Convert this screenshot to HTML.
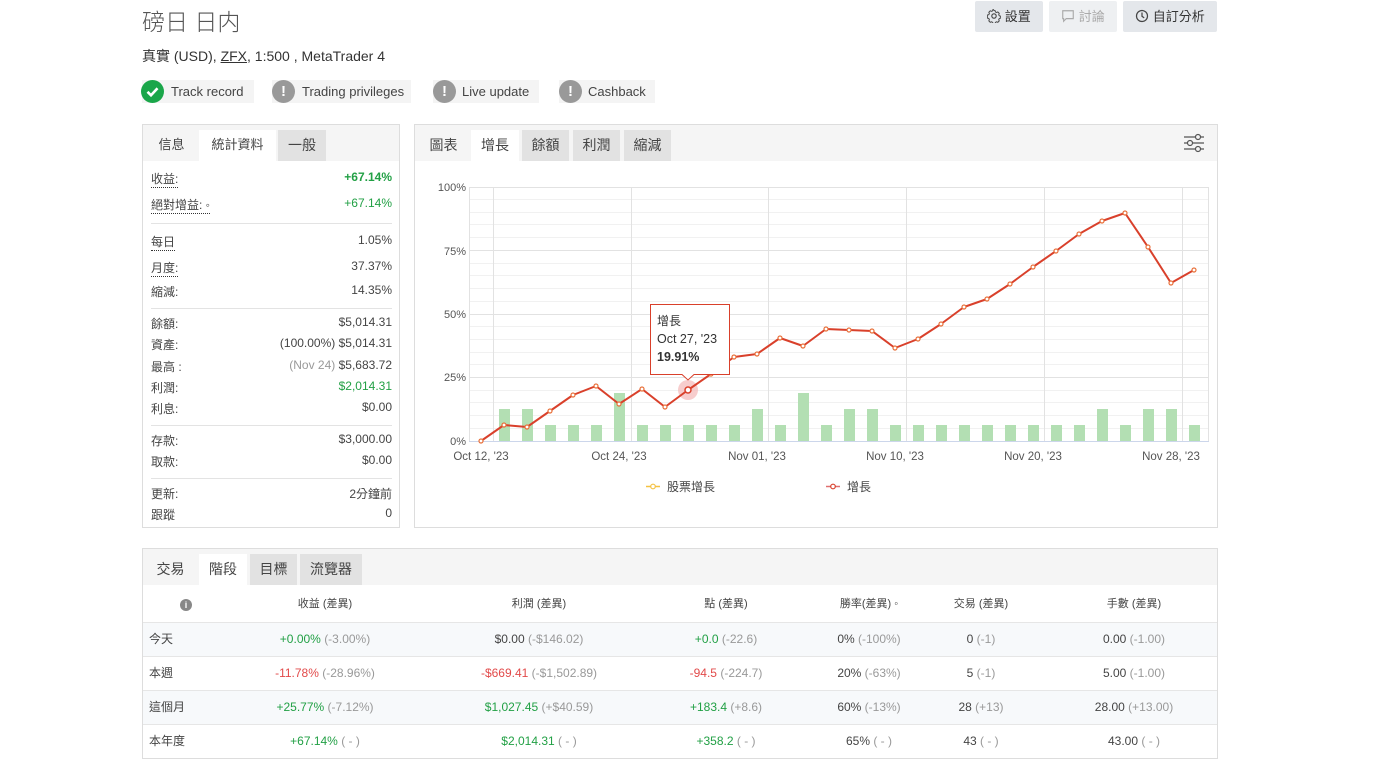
<!DOCTYPE html>
<html><head><meta charset="utf-8">
<style>
*{box-sizing:border-box;margin:0;padding:0}
body{width:1395px;height:779px;background:#fff;font-family:"Liberation Sans","Noto Sans CJK TC",sans-serif;color:#333;position:relative;overflow:hidden;font-size:12px}
.a{position:absolute;white-space:nowrap}
.title{left:142px;top:3px;font-size:23px;color:#555;font-weight:300}
.sub{left:142px;top:46px;font-size:14px;color:#333}
.badge{position:absolute;top:80px;height:23px;background:#f4f4f4;font-size:13px;color:#444;line-height:23px}
.ic{position:absolute;top:80px;width:23px;height:23px;border-radius:50%;background:#999;color:#fff;font-weight:bold;text-align:center;line-height:23px;font-size:15px}
.btn{position:absolute;top:1px;height:31px;background:#e4e7eb;border-radius:2px;font-size:13px;color:#333;line-height:31px;text-align:center}
.panel{position:absolute;border:1px solid #ddd;background:#fff}
.tabbar{position:absolute;left:0;top:0;right:0;height:36px;background:#f5f5f5}
.tab{position:absolute;top:5px;height:31px;line-height:30px;font-size:13px;color:#444;text-align:center}
.tw{background:#fff}
.tg{background:#e2e2e2}
.row{position:absolute;left:8px;right:7px;font-size:12px;color:#444}
.row .l{position:absolute;left:0}
.row .r{position:absolute;right:0}
.dot{border-bottom:1px dotted #333}
.g{color:#22a045}.rd{color:#e24a4a}.gr{color:#999}
.sep{position:absolute;left:8px;right:7px;height:1px;background:#e3e3e3}
.tr{position:absolute;left:0;right:0;height:34px;border-top:1px solid #e6e6e6}
.td{position:absolute;top:0;line-height:33px;font-size:12px;color:#444;transform:translateX(-50%)}
</style></head><body>
<div class="a title">磅日 日内</div>
<div class="a sub">真實 (USD), <span style="text-decoration:underline">ZFX</span>, 1:500 , MetaTrader 4</div>

<div class="badge" style="left:142px;width:112px;padding-left:29px">Track record</div>
<div class="ic" style="left:141px;background:#1aa64a"><svg width="23" height="23" viewBox="0 0 23 23"><path d="M6.5 11.8l3.5 3.5 6.5-7" stroke="#fff" stroke-width="2.6" fill="none"/></svg></div>
<div class="badge" style="left:272px;width:139px;padding-left:30px">Trading privileges</div>
<div class="ic" style="left:272px">!</div>
<div class="badge" style="left:433px;width:106px;padding-left:29px">Live update</div>
<div class="ic" style="left:433px">!</div>
<div class="badge" style="left:559px;width:96px;padding-left:29px">Cashback</div>
<div class="ic" style="left:559px">!</div>

<div class="btn" style="left:975px;width:68px"><svg width="14" height="14" viewBox="0 0 16 16" style="vertical-align:-2px"><circle cx="8" cy="8" r="2.5" fill="none" stroke="#444" stroke-width="1.3"/><path d="M8 1.5l1.2.2.4 1.6 1.3.7 1.5-.6 1.6 1.6-.6 1.5.7 1.3 1.6.4v2.2l-1.6.4-.7 1.3.6 1.5-1.6 1.6-1.5-.6-1.3.7-.4 1.6H6.9l-.4-1.6-1.3-.7-1.5.6-1.6-1.6.6-1.5-.7-1.3-1.6-.4V6.9l1.6-.4.7-1.3-.6-1.5 1.6-1.6 1.5.6 1.3-.7.4-1.6z" fill="none" stroke="#444" stroke-width="1.1"/></svg> 設置</div>
<div class="btn" style="left:1049px;width:68px;background:#eef0f2;color:#aaa"><svg width="14" height="14" viewBox="0 0 16 16" style="vertical-align:-2px"><path d="M2 2h12v9H6l-3 3v-3H2z" fill="none" stroke="#aaa" stroke-width="1.3"/></svg> 討論</div>
<div class="btn" style="left:1123px;width:94px"><svg width="14" height="14" viewBox="0 0 16 16" style="vertical-align:-2px"><circle cx="8" cy="8" r="6.3" fill="none" stroke="#444" stroke-width="1.4"/><path d="M8 4v4.3l2.5 1.8" fill="none" stroke="#444" stroke-width="1.4"/></svg> 自訂分析</div>

<!-- left panel -->
<div class="panel" style="left:142px;top:124px;width:258px;height:404px">
 <div class="tabbar"></div>
 <div class="tab" style="left:1px;width:55px">信息</div>
 <div class="tab tw" style="left:56px;width:77px">統計資料</div>
 <div class="tab tg" style="left:135px;width:48px;font-size:14px">一般</div>
 <div class="row" style="top:45px"><span class="l dot">收益:</span><span class="r g" style="font-weight:bold">+67.14%</span></div>
 <div class="row" style="top:71px"><span class="l dot">絕對增益: ◦</span><span class="r g">+67.14%</span></div>
 <div class="sep" style="top:98px"></div>
 <div class="row" style="top:108px"><span class="l dot">每日</span><span class="r">1.05%</span></div>
 <div class="row" style="top:134px"><span class="l dot">月度:</span><span class="r">37.37%</span></div>
 <div class="row" style="top:158px"><span class="l">縮減:</span><span class="r">14.35%</span></div>
 <div class="sep" style="top:183px"></div>
 <div class="row" style="top:190px"><span class="l">餘額:</span><span class="r">$5,014.31</span></div>
 <div class="row" style="top:211px"><span class="l">資產:</span><span class="r">(100.00%) $5,014.31</span></div>
 <div class="row" style="top:233px"><span class="l">最高 :</span><span class="r"><span class="gr">(Nov 24)</span> $5,683.72</span></div>
 <div class="row" style="top:254px"><span class="l">利潤:</span><span class="r g">$2,014.31</span></div>
 <div class="row" style="top:275px"><span class="l">利息:</span><span class="r">$0.00</span></div>
 <div class="sep" style="top:300px"></div>
 <div class="row" style="top:307px"><span class="l">存款:</span><span class="r">$3,000.00</span></div>
 <div class="row" style="top:328px"><span class="l">取款:</span><span class="r">$0.00</span></div>
 <div class="sep" style="top:353px"></div>
 <div class="row" style="top:360px"><span class="l">更新:</span><span class="r">2分鐘前</span></div>
 <div class="row" style="top:381px"><span class="l">跟蹤</span><span class="r">0</span></div>
</div>

<!-- chart panel -->
<div class="panel" style="left:414px;top:124px;width:804px;height:404px">
 <div class="tabbar"></div>
 <div class="tab" style="left:1px;width:55px;font-size:14px">圖表</div>
 <div class="tab tw" style="left:56px;width:48px;font-size:14px">增長</div>
 <div class="tab tg" style="left:107px;width:47px;font-size:14px">餘額</div>
 <div class="tab tg" style="left:158px;width:47px;font-size:14px">利潤</div>
 <div class="tab tg" style="left:209px;width:47px;font-size:14px">縮減</div>
 <svg style="position:absolute;left:768px;top:8px" width="22" height="20" viewBox="0 0 22 20"><g stroke="#555" stroke-width="1.2" fill="none"><path d="M1 4h20M1 10h20M1 16h20"/><circle cx="15" cy="4" r="2.5" fill="#f5f5f5"/><circle cx="7" cy="10" r="2.5" fill="#f5f5f5"/><circle cx="15" cy="16" r="2.5" fill="#f5f5f5"/></g></svg>
</div>

<svg class="a" style="left:0;top:0" width="1395" height="779" font-family="Liberation Sans, Noto Sans CJK TC, sans-serif">
 <g stroke="#f1f1f1" stroke-width="1">
  <path d="M469 199.5H1209M469 212.5H1209M469 224.5H1209M469 237.5H1209M469 263.5H1209M469 275.5H1209M469 288.5H1209M469 301.5H1209M469 326.5H1209M469 339.5H1209M469 352.5H1209M469 364.5H1209M469 390.5H1209M469 402.5H1209M469 415.5H1209M469 428.5H1209"/>
 </g>
 <g stroke="#e2e2e2" stroke-width="1">
  <path d="M469 187.5H1209M469 250.5H1209M469 314.5H1209M469 377.5H1209"/>
  <path d="M493.5 187V441M631.5 187V441M768.5 187V441M906.5 187V441M1044.5 187V441M1182.5 187V441M1208.5 187V441M469.5 187V441"/>
 </g>
 <path d="M469 441.5H1209" stroke="#ccd6eb"/>
 <g fill="#b3dfb3">
  <rect x="499" y="409" width="11" height="32"/><rect x="522" y="409" width="11" height="32"/>
  <rect x="545" y="425" width="11" height="16"/><rect x="568" y="425" width="11" height="16"/><rect x="591" y="425" width="11" height="16"/>
  <rect x="614" y="393" width="11" height="48"/>
  <rect x="637" y="425" width="11" height="16"/><rect x="660" y="425" width="11" height="16"/><rect x="683" y="425" width="11" height="16"/><rect x="706" y="425" width="11" height="16"/><rect x="729" y="425" width="11" height="16"/>
  <rect x="752" y="409" width="11" height="32"/>
  <rect x="775" y="425" width="11" height="16"/>
  <rect x="798" y="393" width="11" height="48"/>
  <rect x="821" y="425" width="11" height="16"/>
  <rect x="844" y="409" width="11" height="32"/><rect x="867" y="409" width="11" height="32"/>
  <rect x="890" y="425" width="11" height="16"/><rect x="913" y="425" width="11" height="16"/><rect x="936" y="425" width="11" height="16"/><rect x="959" y="425" width="11" height="16"/><rect x="982" y="425" width="11" height="16"/><rect x="1005" y="425" width="11" height="16"/><rect x="1028" y="425" width="11" height="16"/><rect x="1051" y="425" width="11" height="16"/><rect x="1074" y="425" width="11" height="16"/>
  <rect x="1097" y="409" width="11" height="32"/>
  <rect x="1120" y="425" width="11" height="16"/>
  <rect x="1143" y="409" width="11" height="32"/><rect x="1166" y="409" width="11" height="32"/>
  <rect x="1189" y="425" width="11" height="16"/>
 </g>
 <g font-size="11" fill="#555" text-anchor="end">
  <text x="466" y="191">100%</text><text x="466" y="255">75%</text><text x="466" y="318">50%</text><text x="466" y="381">25%</text><text x="466" y="445">0%</text>
 </g>
 <g font-size="11.5" fill="#555" text-anchor="middle">
  <text x="481" y="460">Oct 12, '23</text><text x="619" y="460">Oct 24, '23</text><text x="757" y="460">Nov 01, '23</text><text x="895" y="460">Nov 10, '23</text><text x="1033" y="460">Nov 20, '23</text><text x="1171" y="460">Nov 28, '23</text>
 </g>
 <circle cx="688" cy="390" r="10" fill="#f3b8b8" opacity=".7"/>
 <polyline fill="none" stroke="#d9402b" stroke-width="2" stroke-linejoin="round" points="481,441 504,425 527,427 550,411 573,395 596,386 619,404 642,389 665,407 688,390 711,374 734,357 757,354 780,338 803,346 826,329 849,330 872,331 895,348 918,339 941,324 964,307 987,299 1010,284 1033,267 1056,251 1079,234 1102,221 1125,213 1148,247 1171,283 1194,270"/>
 <g fill="#fff" stroke="#e8703a" stroke-width="1.2">
  <circle cx="481" cy="441" r="2"/><circle cx="504" cy="425" r="2"/><circle cx="527" cy="427" r="2"/><circle cx="550" cy="411" r="2"/><circle cx="573" cy="395" r="2"/><circle cx="596" cy="386" r="2"/><circle cx="619" cy="404" r="2"/><circle cx="642" cy="389" r="2"/><circle cx="665" cy="407" r="2"/><circle cx="711" cy="374" r="2"/><circle cx="734" cy="357" r="2"/><circle cx="757" cy="354" r="2"/><circle cx="780" cy="338" r="2"/><circle cx="803" cy="346" r="2"/><circle cx="826" cy="329" r="2"/><circle cx="849" cy="330" r="2"/><circle cx="872" cy="331" r="2"/><circle cx="895" cy="348" r="2"/><circle cx="918" cy="339" r="2"/><circle cx="941" cy="324" r="2"/><circle cx="964" cy="307" r="2"/><circle cx="987" cy="299" r="2"/><circle cx="1010" cy="284" r="2"/><circle cx="1033" cy="267" r="2"/><circle cx="1056" cy="251" r="2"/><circle cx="1079" cy="234" r="2"/><circle cx="1102" cy="221" r="2"/><circle cx="1125" cy="213" r="2"/><circle cx="1148" cy="247" r="2"/><circle cx="1171" cy="283" r="2"/><circle cx="1194" cy="270" r="2"/>
 </g>
 <circle cx="688" cy="390" r="3" fill="#fff" stroke="#d9402b" stroke-width="1.5"/>
 <path d="M650.5 304.5H729.5V374.5H694L688 380L682 374.5H650.5Z" fill="#fff" stroke="#d9402b"/>
 <text x="657" y="325" font-size="12" fill="#333">增長</text>
 <text x="657" y="343" font-size="12.5" fill="#333">Oct 27, '23</text>
 <text x="657" y="361" font-size="12.5" fill="#333" font-weight="bold">19.91%</text>
 <path d="M646 486.5H660" stroke="#f5c242" stroke-width="1.5"/><circle cx="653" cy="486.5" r="2.3" fill="#fff" stroke="#f5c242" stroke-width="1.2"/>
 <text x="667" y="491" font-size="12" fill="#444">股票增長</text>
 <path d="M826 486.5H840" stroke="#e07070" stroke-width="1.5"/><circle cx="833" cy="486.5" r="2.3" fill="#fff" stroke="#d9402b" stroke-width="1.2"/>
 <text x="847" y="491" font-size="12" fill="#444">增長</text>
</svg>

<!-- bottom panel -->
<div class="panel" style="left:142px;top:548px;width:1076px;height:211px">
 <div class="tabbar"></div>
 <div class="tab" style="left:1px;width:53px;font-size:14px">交易</div>
 <div class="tab tw" style="left:56px;width:48px;font-size:14px">階段</div>
 <div class="tab tg" style="left:107px;width:47px;font-size:14px">目標</div>
 <div class="tab tg" style="left:157px;width:62px;font-size:14px">流覽器</div>
 <div class="tr" style="top:37px;border-top:none;height:36px">
  <div class="td" style="left:43px;line-height:36px"><span style="display:inline-block;width:12px;height:12px;border-radius:50%;background:#888;color:#fff;font-size:9px;line-height:12px;text-align:center;font-weight:bold;vertical-align:0">i</span></div>
  <div class="td" style="left:182px;line-height:36px;font-size:11px">收益 (差異)</div>
  <div class="td" style="left:396px;line-height:36px;font-size:11px">利潤 (差異)</div>
  <div class="td" style="left:583px;line-height:36px;font-size:11px">點 (差異)</div>
  <div class="td" style="left:726px;line-height:36px;font-size:11px">勝率(差異) ◦</div>
  <div class="td" style="left:838px;line-height:36px;font-size:11px">交易 (差異)</div>
  <div class="td" style="left:991px;line-height:36px;font-size:11px">手數 (差異)</div>
 </div>
 <div class="tr" style="top:73px;background:#f7f9fb">
  <div class="td" style="left:6px;transform:none">今天</div>
  <div class="td" style="left:182px"><span class="g">+0.00%</span> <span class="gr">(-3.00%)</span></div>
  <div class="td" style="left:396px">$0.00 <span class="gr">(-$146.02)</span></div>
  <div class="td" style="left:583px"><span class="g">+0.0</span> <span class="gr">(-22.6)</span></div>
  <div class="td" style="left:726px">0% <span class="gr">(-100%)</span></div>
  <div class="td" style="left:838px">0 <span class="gr">(-1)</span></div>
  <div class="td" style="left:991px">0.00 <span class="gr">(-1.00)</span></div>
 </div>
 <div class="tr" style="top:107px">
  <div class="td" style="left:6px;transform:none">本週</div>
  <div class="td" style="left:182px"><span class="rd">-11.78%</span> <span class="gr">(-28.96%)</span></div>
  <div class="td" style="left:396px"><span class="rd">-$669.41</span> <span class="gr">(-$1,502.89)</span></div>
  <div class="td" style="left:583px"><span class="rd">-94.5</span> <span class="gr">(-224.7)</span></div>
  <div class="td" style="left:726px">20% <span class="gr">(-63%)</span></div>
  <div class="td" style="left:838px">5 <span class="gr">(-1)</span></div>
  <div class="td" style="left:991px">5.00 <span class="gr">(-1.00)</span></div>
 </div>
 <div class="tr" style="top:141px;background:#f7f9fb">
  <div class="td" style="left:6px;transform:none">這個月</div>
  <div class="td" style="left:182px"><span class="g">+25.77%</span> <span class="gr">(-7.12%)</span></div>
  <div class="td" style="left:396px"><span class="g">$1,027.45</span> <span class="gr">(+$40.59)</span></div>
  <div class="td" style="left:583px"><span class="g">+183.4</span> <span class="gr">(+8.6)</span></div>
  <div class="td" style="left:726px">60% <span class="gr">(-13%)</span></div>
  <div class="td" style="left:838px">28 <span class="gr">(+13)</span></div>
  <div class="td" style="left:991px">28.00 <span class="gr">(+13.00)</span></div>
 </div>
 <div class="tr" style="top:175px">
  <div class="td" style="left:6px;transform:none">本年度</div>
  <div class="td" style="left:182px"><span class="g">+67.14%</span> <span class="gr">( - )</span></div>
  <div class="td" style="left:396px"><span class="g">$2,014.31</span> <span class="gr">( - )</span></div>
  <div class="td" style="left:583px"><span class="g">+358.2</span> <span class="gr">( - )</span></div>
  <div class="td" style="left:726px">65% <span class="gr">( - )</span></div>
  <div class="td" style="left:838px">43 <span class="gr">( - )</span></div>
  <div class="td" style="left:991px">43.00 <span class="gr">( - )</span></div>
 </div>
</div>
</body></html>
